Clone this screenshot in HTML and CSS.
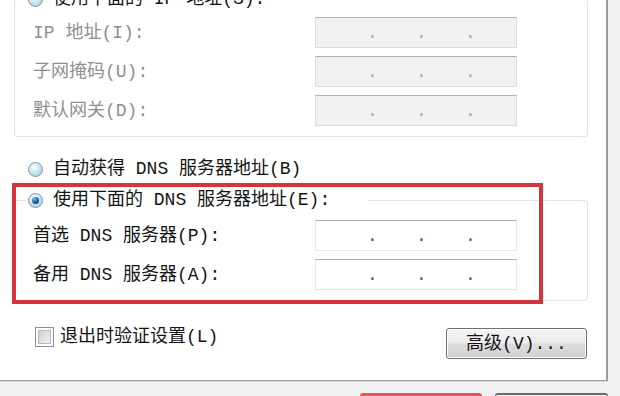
FILE: index.html
```html
<!DOCTYPE html>
<html lang="zh-CN">
<head>
    <meta charset="UTF-8">
    <title>Internet 协议版本 4 (TCP/IPv4) 属性</title>
    <link rel="stylesheet" href="styles.css">
</head>
<body>
    <div class="panel">
        <fieldset class="group">
            <legend><span class="opt"><span class="radio"></span>使用下面的 IP 地址(S):</span></legend>
            <div class="fields">
                <label class="off">IP 地址(I):</label>
                <div class="ip off"><span>.</span><span>.</span><span>.</span></div>
                <label class="off">子网掩码(U):</label>
                <div class="ip off"><span>.</span><span>.</span><span>.</span></div>
                <label class="off">默认网关(D):</label>
                <div class="ip off"><span>.</span><span>.</span><span>.</span></div>
            </div>
        </fieldset>

        <div class="opt auto"><span class="radio"></span>自动获得 DNS 服务器地址(B)</div>

        <fieldset class="group dns">
            <legend><span class="opt"><span class="radio on"></span>使用下面的 DNS 服务器地址(E):</span></legend>
            <div class="fields">
                <label>首选 DNS 服务器(P):</label>
                <div class="ip"><span>.</span><span>.</span><span>.</span></div>
                <label>备用 DNS 服务器(A):</label>
                <div class="ip"><span>.</span><span>.</span><span>.</span></div>
            </div>
        </fieldset>

        <div class="bottom-row">
            <label class="check"><span class="box"></span>退出时验证设置(L)</label>
            <button class="btn">高级(V)...</button>
        </div>

        <div class="mark"></div>
    </div>

    <div class="actions">
        <button class="ok"></button>
        <button class="cancel"></button>
    </div>
</body>
</html>
```

FILE: styles.css
```css
body {
    margin: 0;
    height: 396px;
    overflow: hidden;
    background-color: #f0f0f0;
    font: 18px/22px "Liberation Mono", "Noto Sans CJK SC", monospace;
    color: #141414;
}

.panel {
    position: relative;
    display: flex;
    flex-direction: column;
    width: 606px;
    height: 380px;
    overflow: hidden;
    background-color: #fff;
    border-right: 2px solid #9c9c9c;
    border-bottom: 1px solid #9a9a9a;
    box-shadow: 0 1px 0 #d6d6d6;
}

.group {
    margin: 0 18px 0 14px;
    padding: 7px 0 10px 18px;
    min-width: 0;
    border: 1px solid #dde3e8;
    border-radius: 3px;
}

.group:first-child {
    margin-top: -12px;
}

.group legend {
    margin-left: -7px;
    padding: 0 0 0 2px;
    line-height: 22px;
}

.dns {
    margin-top: 9px;
    padding-top: 9px;
}

.dns legend {
    width: 342px;
    box-sizing: border-box;
}

.opt {
    display: flex;
    align-items: center;
    gap: 10px;
}

.auto {
    margin: 21px 0 0 28px;
}

.radio {
    width: 15px;
    height: 15px;
    box-sizing: border-box;
    border-radius: 50%;
    border: 1px solid #7f95a6;
    background: radial-gradient(circle at 40% 35%, #fafdff 0%, #cfeaf6 40%, #94c7df 100%);
    position: relative;
    flex: none;
}

.radio.on::after {
    content: "";
    position: absolute;
    left: 3px;
    top: 3px;
    width: 7px;
    height: 7px;
    border-radius: 50%;
    background: radial-gradient(circle at 35% 30%, #7fb4e4 0%, #1f5f9e 50%, #0b2f5a 100%);
}

.fields {
    display: grid;
    grid-template-columns: 282px 202px;
    row-gap: 8px;
    align-items: center;
}

.fields label {
    line-height: 22px;
}

.off {
    color: #8f8f8f;
}

.ip {
    display: flex;
    gap: 39px;
    height: 31px;
    box-sizing: border-box;
    padding: 4px 0 0 51px;
    background-color: #fff;
    border: 1px solid #e3e6ea;
    border-top-color: #a9abb0;
    color: #555;
    line-height: 22px;
}

.ip span {
    width: 10px;
    text-align: center;
}

.ip.off {
    background-color: #f1f1f1;
    border-color: #dcdcdc;
    border-top-color: #b0b0b0;
    color: #a3a3a3;
}

.bottom-row {
    display: flex;
    justify-content: space-between;
    align-items: flex-start;
    margin-top: 25px;
    padding: 0 19px 0 35px;
}

.check {
    display: flex;
    align-items: center;
    gap: 6px;
}

.box {
    position: relative;
    width: 19px;
    height: 20px;
    box-sizing: border-box;
    border: 1px solid #8f8f8f;
    background-color: #fff;
}

.box::after {
    content: "";
    position: absolute;
    inset: 2px;
    border: 1px solid #b4b8bd;
    background: linear-gradient(135deg, #cfcfcf 0%, #f2f2f2 100%);
}

.btn {
    margin-top: 2px;
    width: 141px;
    height: 31px;
    font: inherit;
    color: #141414;
    border: 1px solid #707070;
    border-radius: 3px;
    background: linear-gradient(#f4f4f4 0%, #ececec 48%, #dedede 52%, #cfcfcf 100%);
    box-shadow: inset 0 0 0 1px #fcfcfc;
}

.mark {
    position: absolute;
    left: 12px;
    top: 183px;
    width: 531px;
    height: 121px;
    box-sizing: border-box;
    border: 4px solid #d6343d;
}

/* dialog buttons, cropped by the bottom edge */
.actions {
    display: flex;
    justify-content: flex-end;
    gap: 13px;
    height: 3px;
    overflow: hidden;
    margin-top: 12px;
    padding-right: 12px;
}

.actions button {
    flex: none;
    height: 30px;
    padding: 0;
    border-radius: 3px;
}

.ok {
    width: 122px;
    border: 3px solid #e2575c;
    background-color: #f7f7f7;
}

.cancel {
    width: 113px;
    border: 1px solid #6b6b6b;
    border-top-width: 2px;
    background: linear-gradient(#f2f2f2, #dcdcdc);
}
```
